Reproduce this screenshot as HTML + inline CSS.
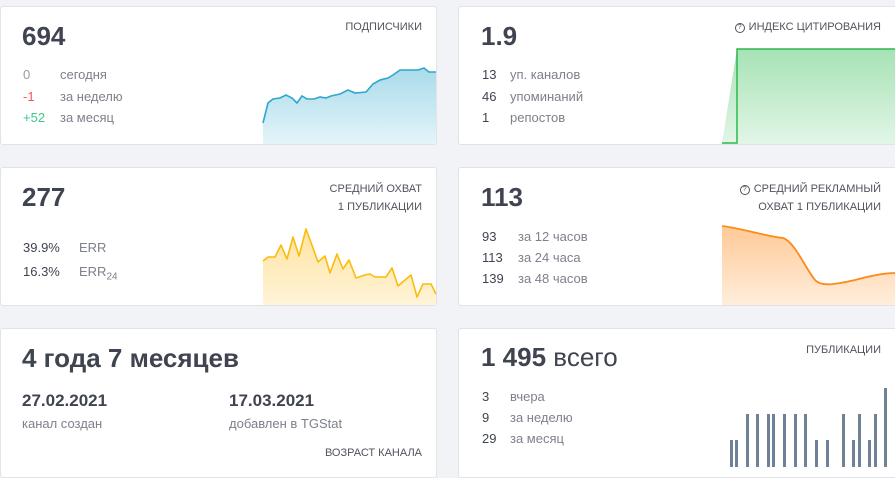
<!DOCTYPE html>
<html><head><meta charset="utf-8"><style>
body{margin:0;width:895px;height:467px;background:#f2f3f7;font-family:"Liberation Sans",sans-serif;position:relative;overflow:hidden;color:#3f4450}
.card{position:absolute;background:#fff;border:1px solid #e1e3e8;border-radius:3px;box-sizing:border-box;overflow:hidden}
.big{position:absolute;font-size:26px;font-weight:bold;color:#3f4450}
.lbl{position:absolute;font-size:11px;color:#50545c;text-align:right;line-height:18px;right:14px}
.row{position:absolute;font-size:13px;color:#7d818b}
.row b{display:inline-block;font-weight:normal}
svg{position:absolute}
.q{display:inline-block;width:8px;height:8px;border:1px solid #50545c;border-radius:50%;font-size:7px;line-height:8px;text-align:center;vertical-align:1px;margin-right:4px}
</style></head><body>

<div class="card" style="left:0;top:6px;width:437px;height:139px"></div>
<div class="big" style="left:22px;top:21px">694</div>
<div class="lbl" style="left:0;width:422px;right:auto;top:18px">ПОДПИСЧИКИ</div>
<div class="row" style="left:23px;top:67px"><b style="width:37px;color:#999">0</b>сегодня</div>
<div class="row" style="left:23px;top:89px"><b style="width:37px;color:#f2545b">-1</b>за неделю</div>
<div class="row" style="left:23px;top:110px"><b style="width:37px;color:#3cc68a">+52</b>за месяц</div>
<svg width="895" height="467" style="left:0;top:0">
<defs>
<linearGradient id="gb" x1="0" y1="0" x2="0" y2="1"><stop offset="0" stop-color="#a9dbea"/><stop offset="1" stop-color="#e4f4f9"/></linearGradient>
<linearGradient id="gy" x1="0" y1="0" x2="0" y2="1"><stop offset="0" stop-color="#ffe3a0"/><stop offset="1" stop-color="#fff4d8"/></linearGradient>
<linearGradient id="go" x1="0" y1="0" x2="0" y2="1"><stop offset="0" stop-color="#ffc995"/><stop offset="1" stop-color="#ffeedd"/></linearGradient>
<linearGradient id="gg" x1="0" y1="0" x2="0" y2="1"><stop offset="0" stop-color="#a6e2b4"/><stop offset="1" stop-color="#e2f6e7"/></linearGradient>
</defs>
<path d="M263,123 L268,103 273,99 280,98 286,95 292,98 297,103 302,96 307,99 314,99 320,97 326,98 331,96 340,94 348,90 355,93 366,92 373,84 380,80 388,78 393,75 400,70 418,70 424,68 429,72 436,72 L436,144 263,144Z" fill="url(#gb)"/>
<path d="M263,123 L268,103 273,99 280,98 286,95 292,98 297,103 302,96 307,99 314,99 320,97 326,98 331,96 340,94 348,90 355,93 366,92 373,84 380,80 388,78 393,75 400,70 418,70 424,68 429,72 436,72" fill="none" stroke="#2fa6cf" stroke-width="1.6"/>
<path d="M722,143 L737,49 895,49 L895,144 722,144Z" fill="url(#gg)"/>
<path d="M722,143 L737,143 737,49 895,49" fill="none" stroke="#2db84d" stroke-width="1.5"/>
<path d="M263,261 L268,257 275,257 281,245 287,259 293,237 299,256 306,229 313,248 318,262 325,256 330,273 337,254 343,269 349,260 356,278 365,275 370,274 375,277 386,277 392,268 398,286 405,280 411,275 417,297 423,284 431,284 436,294 L436,305 263,305Z" fill="url(#gy)"/>
<path d="M263,261 L268,257 275,257 281,245 287,259 293,237 299,256 306,229 313,248 318,262 325,256 330,273 337,254 343,269 349,260 356,278 365,275 370,274 375,277 386,277 392,268 398,286 405,280 411,275 417,297 423,284 431,284 436,294" fill="none" stroke="#fbbc0a" stroke-width="1.6" stroke-linejoin="round"/>
<path d="M722,226 C740,228 765,236 783,238 C795,242 805,268 815,280 C822,288 840,283 855,280 C870,276 885,273 895,273 L895,305 722,305Z" fill="url(#go)"/>
<path d="M722,226 C740,228 765,236 783,238 C795,242 805,268 815,280 C822,288 840,283 855,280 C870,276 885,273 895,273" fill="none" stroke="#fb8c1a" stroke-width="1.8"/>
</svg>

<div class="card" style="left:458px;top:6px;width:445px;height:139px;z-index:-1"></div>
<div class="big" style="left:481px;top:21px">1.9</div>
<div class="lbl" style="top:18px;right:14px"><span class="q">?</span>ИНДЕКС ЦИТИРОВАНИЯ</div>
<div class="row" style="left:482px;top:67px"><b style="width:28px;color:#3f4450">13</b>уп. каналов</div>
<div class="row" style="left:482px;top:89px"><b style="width:28px;color:#3f4450">46</b>упоминаний</div>
<div class="row" style="left:482px;top:110px"><b style="width:28px;color:#3f4450">1</b>репостов</div>

<div class="card" style="left:0;top:167px;width:437px;height:139px;z-index:-1"></div>
<div class="big" style="left:22px;top:182px">277</div>
<div class="lbl" style="left:0;width:422px;right:auto;top:180px">СРЕДНИЙ ОХВАТ<br>1 ПУБЛИКАЦИИ</div>
<div class="row" style="left:23px;top:240px"><b style="width:56px;color:#3f4450">39.9%</b>ERR</div>
<div class="row" style="left:23px;top:264px"><b style="width:56px;color:#3f4450">16.3%</b>ERR<sub style="font-size:10px">24</sub></div>

<div class="card" style="left:458px;top:167px;width:445px;height:139px;z-index:-1"></div>
<div class="big" style="left:481px;top:182px">113</div>
<div class="lbl" style="top:180px"><span class="q">?</span>СРЕДНИЙ РЕКЛАМНЫЙ<br>ОХВАТ 1 ПУБЛИКАЦИИ</div>
<div class="row" style="left:482px;top:229px"><b style="width:36px;color:#3f4450">93</b>за 12 часов</div>
<div class="row" style="left:482px;top:250px"><b style="width:36px;color:#3f4450">113</b>за 24 часа</div>
<div class="row" style="left:482px;top:271px"><b style="width:36px;color:#3f4450">139</b>за 48 часов</div>

<div class="card" style="left:0;top:328px;width:437px;height:150px;z-index:-1"></div>
<div class="big" style="left:22px;top:343px;font-size:26px">4 года 7 месяцев</div>
<div style="position:absolute;left:22px;top:391px;font-size:17px;font-weight:bold">27.02.2021</div>
<div class="row" style="left:22px;top:416px">канал создан</div>
<div style="position:absolute;left:229px;top:391px;font-size:17px;font-weight:bold">17.03.2021</div>
<div class="row" style="left:229px;top:416px">добавлен в TGStat</div>
<div class="lbl" style="left:0;width:422px;right:auto;top:444px">ВОЗРАСТ КАНАЛА</div>

<div class="card" style="left:458px;top:328px;width:445px;height:150px;z-index:-1"></div>
<div class="big" style="left:481px;top:342px">1 495 <span style="font-weight:normal">всего</span></div>
<div class="lbl" style="top:341px">ПУБЛИКАЦИИ</div>
<div class="row" style="left:482px;top:389px"><b style="width:28px;color:#3f4450">3</b>вчера</div>
<div class="row" style="left:482px;top:410px"><b style="width:28px;color:#3f4450">9</b>за неделю</div>
<div class="row" style="left:482px;top:431px"><b style="width:28px;color:#3f4450">29</b>за месяц</div>
<svg width="895" height="467" style="left:0;top:0">
<g fill="#6f8196">
<rect x="730" y="440" width="3" height="30"/><rect x="735" y="440" width="3" height="30"/>
<rect x="746" y="414" width="3" height="60"/><rect x="756" y="414" width="3" height="60"/>
<rect x="767" y="414" width="3" height="60"/><rect x="772" y="414" width="3" height="60"/>
<rect x="783" y="414" width="3" height="60"/><rect x="794" y="414" width="3" height="60"/>
<rect x="804" y="414" width="3" height="60"/><rect x="815" y="440" width="3" height="30"/>
<rect x="826" y="440" width="3" height="30"/><rect x="842" y="414" width="3" height="60"/>
<rect x="852" y="440" width="3" height="30"/><rect x="858" y="414" width="3" height="60"/>
<rect x="868" y="440" width="3" height="30"/><rect x="874" y="414" width="3" height="60"/>
<rect x="884" y="388" width="3" height="80"/>
</g>
</svg>
</body></html>
